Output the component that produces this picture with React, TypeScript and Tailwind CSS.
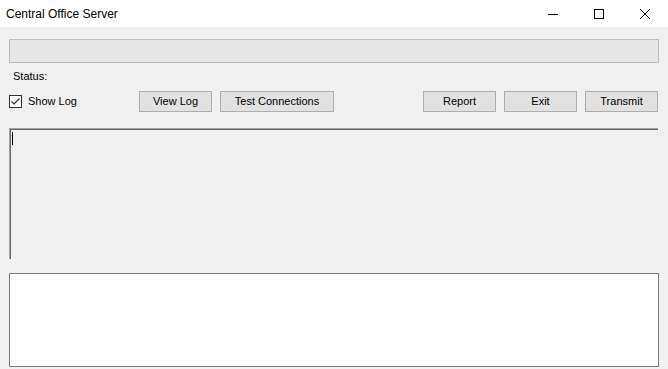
function WinButton({ label, className = "" }: { label: string; className?: string }) {
  return (
    <button
      className={`h-[21px] w-[73px] shrink-0 border border-[#adadad] bg-[#e1e1e1] text-[11px] leading-none text-black ${className}`}
    >
      {label}
    </button>
  );
}

export default function App() {
  return (
    <div
      className="flex h-[369px] w-[668px] flex-col overflow-hidden bg-[#f0f0f0] text-black"
      style={{ fontFamily: '"Liberation Sans", Arial, sans-serif' }}
    >
      {/* title bar */}
      <div className="flex h-[27px] shrink-0 items-center bg-white">
        <span className="pl-[6px] text-[12px]">Central Office Server</span>
        <div className="ml-auto flex h-full">
          <div className="flex w-[46px] items-center justify-center">
            <svg width="10" height="10" viewBox="0 0 10 10">
              <line x1="0" y1="5.5" x2="10" y2="5.5" stroke="#000" strokeWidth="1" />
            </svg>
          </div>
          <div className="flex w-[46px] items-center justify-center">
            <svg width="10" height="10" viewBox="0 0 10 10">
              <rect x="0.5" y="0.5" width="9" height="9" fill="none" stroke="#000" strokeWidth="1" />
            </svg>
          </div>
          <div className="flex w-[46px] items-center justify-center">
            <svg width="10" height="10" viewBox="0 0 10 10">
              <path d="M0 0 L10 10 M10 0 L0 10" stroke="#000" strokeWidth="1" />
            </svg>
          </div>
        </div>
      </div>

      <div className="flex flex-col pl-[9px] pr-[9px]">
        {/* progress bar */}
        <div className="mt-[12px] h-[24px] border border-[#bcbcbc] bg-[#e6e6e6]" />

        <div className="mt-[7px] pl-[4px] text-[11px] leading-[13px]">Status:</div>

        {/* controls row */}
        <div className="mt-[8px] flex h-[21px] items-center">
          <div className="flex w-[130px] items-center">
            <div className="flex h-[13px] w-[13px] items-center justify-center border border-[#333333] bg-white">
              <svg width="11" height="11" viewBox="0 0 11 11">
                <path d="M1.5 5.5 L4 8 L9.5 2.5" fill="none" stroke="#333" strokeWidth="1.2" />
              </svg>
            </div>
            <span className="ml-[6px] text-[11px]">Show Log</span>
          </div>
          <WinButton label="View Log" />
          <WinButton label="Test Connections" className="ml-[8px] w-[114px]" />
          <div className="ml-auto mr-[1px] flex gap-[8px]">
            <WinButton label="Report" />
            <WinButton label="Exit" />
            <WinButton label="Transmit" />
          </div>
        </div>

        {/* log area */}
        <div className="mt-[16px] mr-[1px] h-[131px] border-t border-l border-[#a0a0a0] border-r-white border-b-white">
          <div className="h-full border-t border-l border-[#696969] border-r-[#e3e3e3] border-b-[#e3e3e3] bg-[#f0f0f0] pl-[1px] pt-[2px]">
            <div className="h-[13px] w-[1px] bg-black" />
          </div>
        </div>

        {/* text area */}
        <div className="mt-[14px] h-[94px] border border-[#7a7a7a] bg-white" />
      </div>
    </div>
  );
}
